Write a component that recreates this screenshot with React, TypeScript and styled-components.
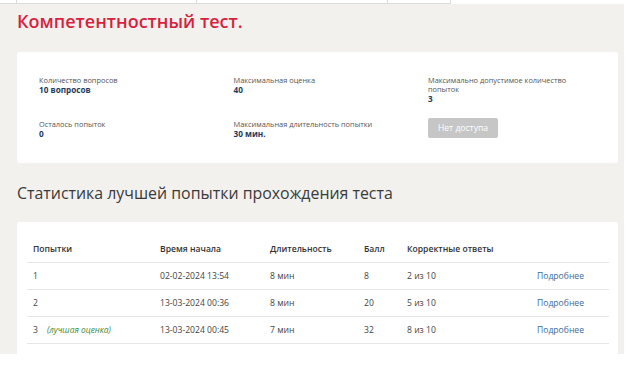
import React from 'react';
import styled, { createGlobalStyle } from 'styled-components';

const GlobalStyle = createGlobalStyle`
  html, body {
    margin: 0;
    padding: 0;
    background: #ffffff;
    font-family: 'Open Sans', 'Noto Sans', sans-serif;
  }
`;

const TabBar = styled.div`
  display: flex;
  height: 4px;
  overflow: hidden;
`;

const Tab = styled.div<{ $w: number }>`
  width: ${(p) => p.$w}px;
  height: 4px;
  box-sizing: border-box;
  border-right: 1px solid #dcdcdc;
  border-bottom: 1px solid #dcdcdc;
  background: #fff;
`;

const Main = styled.div`
  width: 624px;
  height: 350px;
  box-sizing: border-box;
  background: #f2f1ee;
  padding: 0 6px 0 17px;
  overflow: hidden;
`;

const Title = styled.h1`
  margin: 0;
  padding-top: 5px;
  height: 48px;
  box-sizing: border-box;
  font-size: 18px;
  font-weight: 600;
  color: #d71f3e;
`;

const Card = styled.div`
  background: #fff;
  border-radius: 3px;
`;

const InfoCard = styled(Card)`
  height: 111px;
  box-sizing: border-box;
  padding: 24px 0 0 22px;
  display: grid;
  grid-template-columns: repeat(3, 194.5px);
  grid-auto-rows: 44px;
`;

const Field = styled.div<{ $narrow?: boolean }>`
  ${(p) => (p.$narrow ? 'max-width: 150px;' : '')}
  font-size: 7.4px;
  line-height: 9px;
`;

const Label = styled.div`
  color: #555;
`;

const Value = styled.div`
  color: #1e3a5c;
  font-weight: 700;
  font-size: 8.2px;
`;

const DisabledButton = styled.button`
  width: 70px;
  height: 20px;
  margin-top: -2px;
  border: none;
  border-radius: 2px;
  background: #c6c6c6;
  color: #fff;
  font-family: inherit;
  font-size: 8.6px;
  padding: 0;
`;

const Heading = styled.h2`
  margin: 0;
  padding-top: 19px;
  height: 59px;
  box-sizing: border-box;
  font-size: 15.9px;
  font-weight: 400;
  color: #3a3a3a;
`;

const TableCard = styled(Card)`
  height: 140px;
  padding: 14px 9px 0 10px;
  box-sizing: border-box;
`;

const Table = styled.table`
  width: 100%;
  border-collapse: collapse;
  table-layout: fixed;
  font-size: 8.6px;
  color: #444;
`;

const Th = styled.th<{ $w?: number }>`
  box-sizing: border-box;
  ${(p) => (p.$w ? `width: ${p.$w}px;` : '')}
  text-align: left;
  font-weight: 600;
  color: #333;
  height: 26px;
  padding: 0 6px;
  border-bottom: 1px solid #e6e6e6;
`;

const Td = styled.td`
  height: 26px;
  padding: 0 6px;
  border-bottom: 1px solid #e6e6e6;
  white-space: nowrap;
`;

const Best = styled.span`
  margin-left: 9px;
  font-style: italic;
  color: #3d8b3d;
  font-size: 8.4px;
`;

const Link = styled.a`
  color: #3c6b99;
  text-decoration: none;
`;

const attempts = [
  { n: 1, start: '02-02-2024 13:54', dur: '8 мин', score: 8, correct: '2 из 10', best: false },
  { n: 2, start: '13-03-2024 00:36', dur: '8 мин', score: 20, correct: '5 из 10', best: false },
  { n: 3, start: '13-03-2024 00:45', dur: '7 мин', score: 32, correct: '8 из 10', best: true },
];

const App: React.FC = () => {
  return (
    <>
      <GlobalStyle />
      <TabBar>
        <Tab $w={17} />
        <Tab $w={180} />
        <Tab $w={191} />
        <Tab $w={63} />
      </TabBar>
      <Main>
        <Title>Компетентностный тест.</Title>
        <InfoCard>
          <Field>
            <Label>Количество вопросов</Label>
            <Value>10 вопросов</Value>
          </Field>
          <Field>
            <Label>Максимальная оценка</Label>
            <Value>40</Value>
          </Field>
          <Field $narrow>
            <Label>Максимально допустимое количество попыток</Label>
            <Value>3</Value>
          </Field>
          <Field>
            <Label>Осталось попыток</Label>
            <Value>0</Value>
          </Field>
          <Field>
            <Label>Максимальная длительность попытки</Label>
            <Value>30 мин.</Value>
          </Field>
          <Field>
            <DisabledButton disabled>Нет доступа</DisabledButton>
          </Field>
        </InfoCard>
        <Heading>Статистика лучшей попытки прохождения теста</Heading>
        <TableCard>
          <Table>
            <thead>
              <tr>
                <Th $w={127}>Попытки</Th>
                <Th $w={110}>Время начала</Th>
                <Th $w={94}>Длительность</Th>
                <Th $w={43}>Балл</Th>
                <Th $w={130}>Корректные ответы</Th>
                <Th />
              </tr>
            </thead>
            <tbody>
              {attempts.map((a) => (
                <tr key={a.n}>
                  <Td>
                    {a.n}
                    {a.best && <Best>(лучшая оценка)</Best>}
                  </Td>
                  <Td>{a.start}</Td>
                  <Td>{a.dur}</Td>
                  <Td>{a.score}</Td>
                  <Td>{a.correct}</Td>
                  <Td>
                    <Link href="#">Подробнее</Link>
                  </Td>
                </tr>
              ))}
            </tbody>
          </Table>
        </TableCard>
      </Main>
    </>
  );
};

export default App;
